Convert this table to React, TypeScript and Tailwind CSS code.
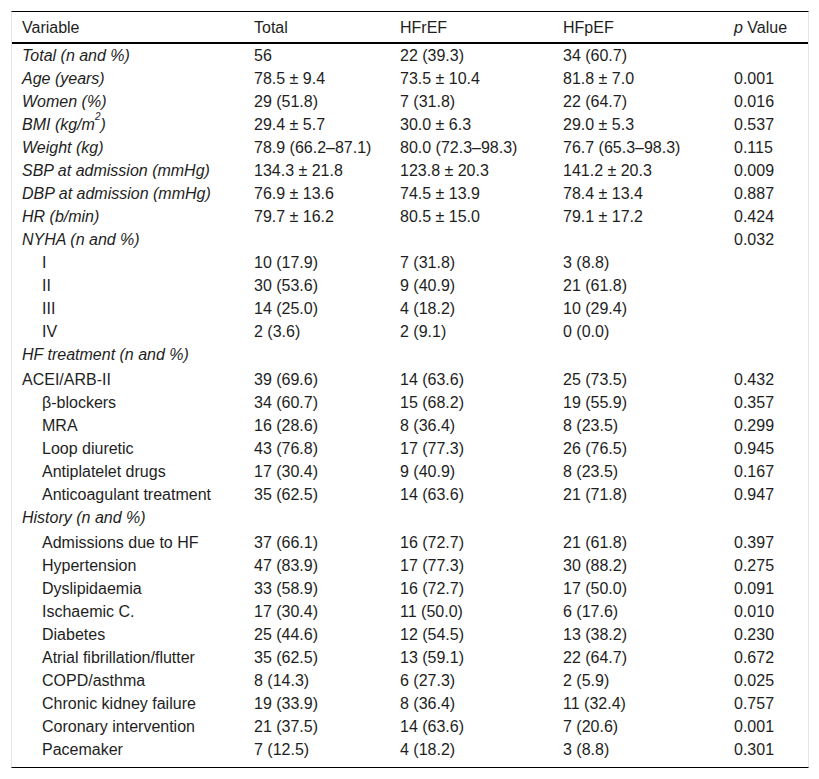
import React from "react";

type Row = {
  label: React.ReactNode;
  italic?: boolean;
  indent?: boolean;
  section?: boolean;
  v: [string, string, string, string];
};

const rows: Row[] = [
  { label: "Total (n and %)", italic: true, v: ["56", "22 (39.3)", "34 (60.7)", ""] },
  { label: "Age (years)", italic: true, v: ["78.5 ± 9.4", "73.5 ± 10.4", "81.8 ± 7.0", "0.001"] },
  { label: "Women (%)", italic: true, v: ["29 (51.8)", "7 (31.8)", "22 (64.7)", "0.016"] },
  {
    label: (
      <>
        BMI (kg/m<sup className="text-[10px] leading-none align-[5px]">2</sup>)
      </>
    ),
    italic: true,
    v: ["29.4 ± 5.7", "30.0 ± 6.3", "29.0 ± 5.3", "0.537"],
  },
  { label: "Weight (kg)", italic: true, v: ["78.9 (66.2–87.1)", "80.0 (72.3–98.3)", "76.7 (65.3–98.3)", "0.115"] },
  { label: "SBP at admission (mmHg)", italic: true, v: ["134.3 ± 21.8", "123.8 ± 20.3", "141.2 ± 20.3", "0.009"] },
  { label: "DBP at admission (mmHg)", italic: true, v: ["76.9 ± 13.6", "74.5 ± 13.9", "78.4 ± 13.4", "0.887"] },
  { label: "HR (b/min)", italic: true, v: ["79.7 ± 16.2", "80.5 ± 15.0", "79.1 ± 17.2", "0.424"] },
  { label: "NYHA (n and %)", italic: true, v: ["", "", "", "0.032"] },
  { label: "I", indent: true, v: ["10 (17.9)", "7 (31.8)", "3 (8.8)", ""] },
  { label: "II", indent: true, v: ["30 (53.6)", "9 (40.9)", "21 (61.8)", ""] },
  { label: "III", indent: true, v: ["14 (25.0)", "4 (18.2)", "10 (29.4)", ""] },
  { label: "IV", indent: true, v: ["2 (3.6)", "2 (9.1)", "0 (0.0)", ""] },
  { label: "HF treatment (n and %)", italic: true, section: true, v: ["", "", "", ""] },
  { label: "ACEI/ARB-II", v: ["39 (69.6)", "14 (63.6)", "25 (73.5)", "0.432"] },
  { label: "β-blockers", indent: true, v: ["34 (60.7)", "15 (68.2)", "19 (55.9)", "0.357"] },
  { label: "MRA", indent: true, v: ["16 (28.6)", "8 (36.4)", "8 (23.5)", "0.299"] },
  { label: "Loop diuretic", indent: true, v: ["43 (76.8)", "17 (77.3)", "26 (76.5)", "0.945"] },
  { label: "Antiplatelet drugs", indent: true, v: ["17 (30.4)", "9 (40.9)", "8 (23.5)", "0.167"] },
  { label: "Anticoagulant treatment", indent: true, v: ["35 (62.5)", "14 (63.6)", "21 (71.8)", "0.947"] },
  { label: "History (n and %)", italic: true, section: true, v: ["", "", "", ""] },
  { label: "Admissions due to HF", indent: true, v: ["37 (66.1)", "16 (72.7)", "21 (61.8)", "0.397"] },
  { label: "Hypertension", indent: true, v: ["47 (83.9)", "17 (77.3)", "30 (88.2)", "0.275"] },
  { label: "Dyslipidaemia", indent: true, v: ["33 (58.9)", "16 (72.7)", "17 (50.0)", "0.091"] },
  { label: "Ischaemic C.", indent: true, v: ["17 (30.4)", "11 (50.0)", "6 (17.6)", "0.010"] },
  { label: "Diabetes", indent: true, v: ["25 (44.6)", "12 (54.5)", "13 (38.2)", "0.230"] },
  { label: "Atrial fibrillation/flutter", indent: true, v: ["35 (62.5)", "13 (59.1)", "22 (64.7)", "0.672"] },
  { label: "COPD/asthma", indent: true, v: ["8 (14.3)", "6 (27.3)", "2 (5.9)", "0.025"] },
  { label: "Chronic kidney failure", indent: true, v: ["19 (33.9)", "8 (36.4)", "11 (32.4)", "0.757"] },
  { label: "Coronary intervention", indent: true, v: ["21 (37.5)", "14 (63.6)", "7 (20.6)", "0.001"] },
  { label: "Pacemaker", indent: true, v: ["7 (12.5)", "4 (18.2)", "3 (8.8)", "0.301"] },
];

export default function App() {
  return (
    <div className="min-h-[779px] w-[819px] bg-white pt-[11px] text-[#1e1e1e] text-[16px] font-['Liberation_Sans',Arial,sans-serif]">
      <div className="ml-[11px] w-[798px] border-x border-x-[#e6e6e6] border-t border-t-black border-b border-b-black pb-[6px]">
        <div className="grid h-[32px] grid-cols-[232px_146px_163px_171px_1fr] items-center border-b-2 border-b-black leading-[23px]">
          <div className="pl-[10px]">Variable</div>
          <div className="pl-[10px]">Total</div>
          <div className="pl-[10px]">HFrEF</div>
          <div className="pl-[10px]">HFpEF</div>
          <div className="pl-[10px]">
            <span className="italic">p</span> Value
          </div>
        </div>
        {rows.map((r, i) => (
          <div
            key={i}
            className={
              "grid grid-cols-[232px_146px_163px_171px_1fr] items-start leading-[23px] " +
              (r.section ? "h-[25px]" : "h-[23px]")
            }
          >
            <div className={(r.indent ? "pl-[30px]" : "pl-[10px]") + (r.italic ? " italic" : "") + " whitespace-nowrap"}>
              {r.label}
            </div>
            {r.v.map((c, j) => (
              <div key={j} className="pl-[10px] whitespace-nowrap">
                {c}
              </div>
            ))}
          </div>
        ))}
      </div>
    </div>
  );
}
